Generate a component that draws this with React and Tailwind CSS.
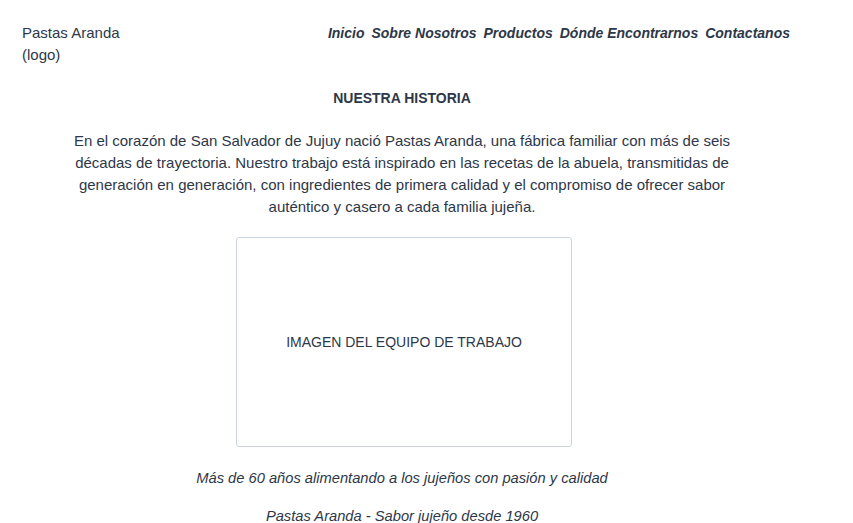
import React from "react";

const links = ["Inicio", "Sobre Nosotros", "Productos", "Dónde Encontrarnos", "Contactanos"];

export default function App() {
  return (
    <div className="min-h-screen bg-white text-[#2d3748] font-['Liberation_Sans',Arial,sans-serif] text-[15px] leading-[22px]">
      <header className="flex items-start justify-between pl-[22px] pr-[63px] pt-[22px]">
        <div>
          <p>Pastas Aranda</p>
          <p>(logo)</p>
        </div>
        <nav className="flex gap-[7px] text-[14px] font-bold italic">
          {links.map((link) => (
            <a key={link} href="#">
              {link}
            </a>
          ))}
        </nav>
      </header>

      <main className="flex flex-col items-center pl-[22px] pr-[71px]">
        <h1 className="mt-[21px] text-[14px] font-bold">NUESTRA HISTORIA</h1>
        <p className="mt-[21px] max-w-[684px] text-center">
          En el corazón de San Salvador de Jujuy nació Pastas Aranda, una fábrica familiar con más de seis
          décadas de trayectoria. Nuestro trabajo está inspirado en las recetas de la abuela, transmitidas de
          generación en generación, con ingredientes de primera calidad y el compromiso de ofrecer sabor
          auténtico y casero a cada familia jujeña.
        </p>
        <div className="ml-[4px] mt-[19px] flex h-[210px] w-[336px] items-center justify-center rounded-[3px] border border-[#cbd5e0] text-[14px]">
          IMAGEN DEL EQUIPO DE TRABAJO
        </div>
        <p className="mt-[20px] text-[14.7px] italic">Más de 60 años alimentando a los jujeños con pasión y calidad</p>
        <p className="mt-[16px] text-[14.7px] italic">Pastas Aranda - Sabor jujeño desde 1960</p>
      </main>
    </div>
  );
}
